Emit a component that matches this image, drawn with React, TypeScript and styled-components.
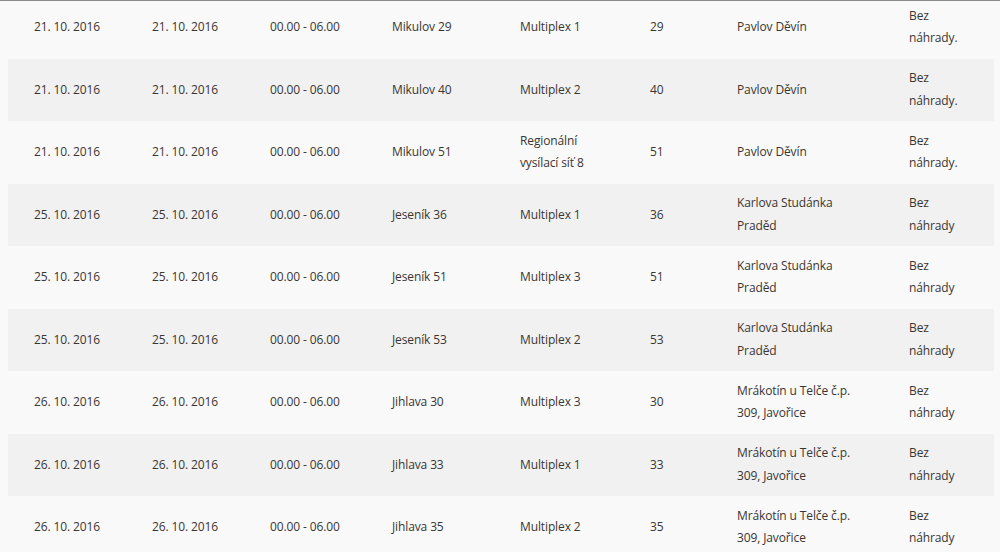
import styled, { createGlobalStyle } from "styled-components";

const GlobalStyle = createGlobalStyle`
  html, body {
    margin: 0;
    padding: 0;
    background: #f9f9f9;
  }
  body {
    font-family: "Open Sans", "Liberation Sans", sans-serif;
  }
`;

const Frame = styled.div`
  width: 1000px;
  height: 552px;
  overflow: hidden;
  border-top: 1px solid #8a8a8a;
  box-sizing: border-box;
  background: #f9f9f9;
`;

const Table = styled.table`
  margin: -5px 0 0 8px;
  width: 986px;
  border-collapse: collapse;
  table-layout: fixed;
  font-size: 12px;
  line-height: 22.5px;
  letter-spacing: -0.12px;
  color: #3a3632;
`;

const Row = styled.tr<{ $striped: boolean }>`
  background: ${(p) => (p.$striped ? "#f1f1f1" : "transparent")};
`;

const Cell = styled.td`
  padding: 8.75px 16px 8.75px 26px;
  vertical-align: middle;
  text-align: left;

  &:last-child {
    padding-right: 30px;
  }
`;

const widths = [118, 118, 122, 128, 130, 87, 172, 111];

type Outage = {
  from: string;
  to: string;
  time: string;
  station: string;
  network: string;
  channel: string;
  site: string;
  note: string;
};

const rows: Outage[] = [
  { from: "21. 10. 2016", to: "21. 10. 2016", time: "00.00 - 06.00", station: "Mikulov 29", network: "Multiplex 1", channel: "29", site: "Pavlov Děvín", note: "Bez náhrady." },
  { from: "21. 10. 2016", to: "21. 10. 2016", time: "00.00 - 06.00", station: "Mikulov 40", network: "Multiplex 2", channel: "40", site: "Pavlov Děvín", note: "Bez náhrady." },
  { from: "21. 10. 2016", to: "21. 10. 2016", time: "00.00 - 06.00", station: "Mikulov 51", network: "Regionální vysílací síť 8", channel: "51", site: "Pavlov Děvín", note: "Bez náhrady." },
  { from: "25. 10. 2016", to: "25. 10. 2016", time: "00.00 - 06.00", station: "Jeseník 36", network: "Multiplex 1", channel: "36", site: "Karlova Studánka Praděd", note: "Bez náhrady" },
  { from: "25. 10. 2016", to: "25. 10. 2016", time: "00.00 - 06.00", station: "Jeseník 51", network: "Multiplex 3", channel: "51", site: "Karlova Studánka Praděd", note: "Bez náhrady" },
  { from: "25. 10. 2016", to: "25. 10. 2016", time: "00.00 - 06.00", station: "Jeseník 53", network: "Multiplex 2", channel: "53", site: "Karlova Studánka Praděd", note: "Bez náhrady" },
  { from: "26. 10. 2016", to: "26. 10. 2016", time: "00.00 - 06.00", station: "Jihlava 30", network: "Multiplex 3", channel: "30", site: "Mrákotín u Telče č.p. 309, Javořice", note: "Bez náhrady" },
  { from: "26. 10. 2016", to: "26. 10. 2016", time: "00.00 - 06.00", station: "Jihlava 33", network: "Multiplex 1", channel: "33", site: "Mrákotín u Telče č.p. 309, Javořice", note: "Bez náhrady" },
  { from: "26. 10. 2016", to: "26. 10. 2016", time: "00.00 - 06.00", station: "Jihlava 35", network: "Multiplex 2", channel: "35", site: "Mrákotín u Telče č.p. 309, Javořice", note: "Bez náhrady" },
];

export default function App() {
  return (
    <>
      <GlobalStyle />
      <Frame>
        <Table>
          <colgroup>
            {widths.map((w, i) => (
              <col key={i} style={{ width: w }} />
            ))}
          </colgroup>
          <tbody>
            {rows.map((r, i) => (
              <Row key={i} $striped={i % 2 === 1}>
                <Cell>{r.from}</Cell>
                <Cell>{r.to}</Cell>
                <Cell>{r.time}</Cell>
                <Cell>{r.station}</Cell>
                <Cell>{r.network}</Cell>
                <Cell>{r.channel}</Cell>
                <Cell>{r.site}</Cell>
                <Cell>{r.note}</Cell>
              </Row>
            ))}
          </tbody>
        </Table>
      </Frame>
    </>
  );
}
